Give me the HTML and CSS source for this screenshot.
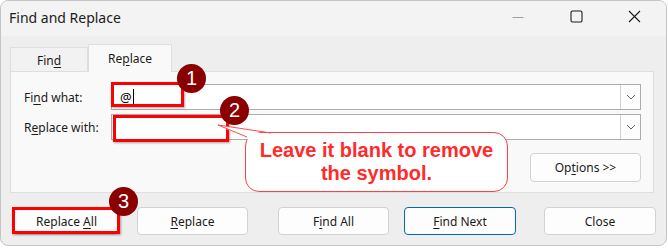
FILE: index.html
```html
<!DOCTYPE html>
<html>
<head>
<meta charset="utf-8">
<link rel="stylesheet" href="styles.css">
</head>
<body>
<div class="window">
  <div class="titlebar">
    <span class="title">Find and Replace</span>
    <div class="controls">
      <div class="ctl"><svg width="12" height="12" viewBox="0 0 12 12"><line x1="0.5" y1="6.5" x2="11.5" y2="6.5" stroke="#a0a0a0" stroke-width="1"/></svg></div>
      <div class="ctl"><svg width="13" height="13" viewBox="0 0 13 13"><rect x="1" y="1" width="11" height="11" rx="1.5" fill="none" stroke="#1a1a1a" stroke-width="1.1"/></svg></div>
      <div class="ctl"><svg width="13" height="13" viewBox="0 0 13 13"><path d="M1 1 L12 12 M12 1 L1 12" stroke="#1a1a1a" stroke-width="1.1"/></svg></div>
    </div>
  </div>
  <div class="body">
    <div class="tabs">
      <div class="tab"><span>Fin<u>d</u></span></div>
      <div class="tab active"><span>Re<u>p</u>lace</span></div>
    </div>
    <div class="panel">
      <div class="row">
        <span class="label">Fi<u>n</u>d what:</span>
        <div class="combo">
          <div class="field"><span>@</span><span class="caret"></span></div>
          <div class="drop"><svg width="10" height="6" viewBox="0 0 10 6"><path d="M1 1 L5 5 L9 1" fill="none" stroke="#606060" stroke-width="1"/></svg></div>
        </div>
      </div>
      <div class="row">
        <span class="label">R<u>e</u>place with:</span>
        <div class="combo">
          <div class="field"></div>
          <div class="drop"><svg width="10" height="6" viewBox="0 0 10 6"><path d="M1 1 L5 5 L9 1" fill="none" stroke="#606060" stroke-width="1"/></svg></div>
        </div>
      </div>
      <div class="opt-row">
        <div class="btn opt"><span>Op<u>t</u>ions &gt;&gt;</span></div>
      </div>
    </div>
    <div class="buttons">
      <div class="btn b-all"><span>Replace <u>A</u>ll</span></div>
      <div class="btn b-rep"><span><u>R</u>eplace</span></div>
      <div class="btn b-fall"><span>F<u>i</u>nd All</span></div>
      <div class="btn b-next"><span><u>F</u>ind Next</span></div>
      <div class="btn b-close"><span>Close</span></div>
    </div>
  </div>

  <div class="mark m1"></div>
  <div class="mark m2"></div>
  <div class="mark m3"></div>

  <div class="callout">Leave it blank to remove<br>the symbol.</div>
  <svg class="tail" width="668" height="248" viewBox="0 0 668 248">
    <polygon points="249,140 218,125 272,135" fill="#fff"/>
    <polyline points="247,137 218,125 271,133" fill="none" stroke="#ff4a4a" stroke-width="1"/>
  </svg>

  <div class="badge b1">1</div>
  <div class="badge b2">2</div>
  <div class="badge b3">3</div>
</div>
</body>
</html>
```

FILE: styles.css
```css
* { box-sizing: border-box; }
html, body { margin: 0; padding: 0; }
body {
  width: 668px;
  height: 248px;
  background: #ffffff;
  font-family: "Noto Sans", "Open Sans", sans-serif;
  font-size: 12px;
  color: #1a1a1a;
  overflow: hidden;
}
u { text-underline-offset: 2px; }
.window {
  position: relative;
  width: 667px;
  height: 246px;
  background: #eeeeee;
  border: 1px solid #c4c4c4;
  border-radius: 8px;
  overflow: hidden;
  display: flex;
  flex-direction: column;
}
.titlebar {
  height: 35px;
  background: #f3f3f3;
  display: flex;
  align-items: center;
  justify-content: space-between;
  padding-left: 8px;
}
.title { font-size: 14px; color: #1c1c1c; margin-top: -3px; }
.controls { display: flex; height: 100%; margin-right: 3px; }
.ctl {
  width: 58px;
  display: flex;
  align-items: center;
  justify-content: center;
  margin-top: -4px;
}
.body { flex: 1; display: flex; flex-direction: column; }
.tabs {
  display: flex;
  align-items: flex-end;
  height: 27px;
  margin-top: 8px;
  padding-left: 9px;
}
.tab {
  height: 24px;
  width: 78px;
  background: #f2f2f2;
  border: 1px solid #dedede;
  border-bottom: none;
  display: flex;
  align-items: center;
  justify-content: center;
  padding-top: 2px;
}
.tab.active {
  height: 28px;
  width: 84px;
  background: #f9f9f9;
  margin-bottom: -1px;
  position: relative;
  z-index: 1;
  padding-top: 0;
}
.panel {
  margin: 0 12px 0 9px;
  background: #f9f9f9;
  border: 1px solid #dedede;
  padding: 12px 12px 10px 13px;
  display: flex;
  flex-direction: column;
  gap: 4px;
}
.row { display: flex; align-items: center; height: 26px; }
.label { width: 87px; }
.combo {
  flex: 1;
  height: 26px;
  display: flex;
  background: #fff;
  border: 1px solid #acacac;
}
.field {
  flex: 1;
  display: flex;
  align-items: center;
  padding-left: 8px;
  color: #000;
  font-size: 13px;
}
.caret { display: inline-block; width: 1px; height: 16px; background: #000; margin-left: 1px; }
.drop {
  width: 20px;
  border-left: 1px solid #d0d0d0;
  background: #fdfdfd;
  display: flex;
  align-items: center;
  justify-content: center;
}
.opt-row { display: flex; justify-content: flex-end; margin-top: 9px; }
.btn {
  height: 29px;
  background: #fdfdfd;
  border: 1px solid #d2d2d2;
  border-radius: 4px;
  display: flex;
  align-items: center;
  justify-content: center;
  color: #1a1a1a;
}
.opt { width: 111px; }
.buttons {
  display: flex;
  margin-top: 14px;
  padding-left: 13px;
}
.buttons .btn { height: 28px; }
.b-all { width: 105px; }
.b-rep { width: 111px; margin-left: 18px; }
.b-fall { width: 111px; margin-left: 30px; }
.b-next { width: 112px; margin-left: 15px; border-color: #0067c0; }
.b-close { width: 112px; margin-left: 28px; }

.mark {
  position: absolute;
  border: 3px solid #ff0000;
  box-shadow: 1px 1px 2px rgba(0,0,0,0.35);
}
.m1 { left: 110px; top: 81px; width: 73px; height: 25px; }
.m2 { left: 112px; top: 114px; width: 116px; height: 27px; }
.m3 { left: 11px; top: 206px; width: 108px; height: 27px; }

.callout {
  position: absolute;
  left: 244px;
  top: 131px;
  width: 263px;
  height: 60px;
  background: #fff;
  border: 1.5px solid #ff4040;
  border-radius: 14px;
  font-family: "Liberation Sans", Arial, sans-serif;
  font-weight: bold;
  font-size: 20px;
  line-height: 23px;
  color: #ff2b2b;
  text-align: center;
  padding-top: 6px;
}
.tail { position: absolute; left: -1px; top: -1px; pointer-events: none; }

.badge {
  position: absolute;
  width: 29px;
  height: 29px;
  border-radius: 50%;
  background: #8a0000;
  color: #fff;
  font-family: "Liberation Sans", Arial, sans-serif;
  font-size: 20px;
  display: flex;
  align-items: center;
  justify-content: center;
}
.b1 { left: 176px; top: 63px; }
.b2 { left: 219px; top: 95px; }
.b3 { left: 108px; top: 186px; }
```
